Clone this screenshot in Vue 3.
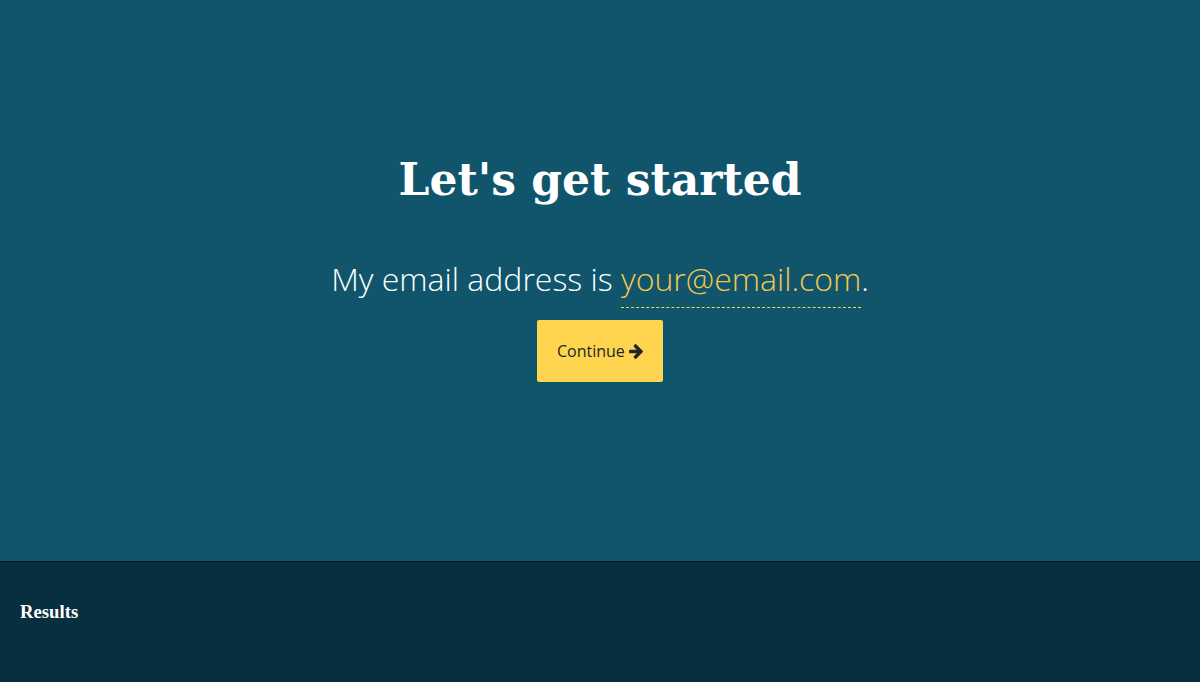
<script setup>
import { ref } from 'vue';

const email = ref('your@email.com');
</script>

<template>
  <div class="page">
    <main class="hero">
      <h1 class="title">Let's get started</h1>
      <p class="sentence">
        My email address is
        <span class="email">{{ email }}</span>.
      </p>
      <button class="continue" type="button">
        Continue
        <svg class="arrow" viewBox="128 192 1472 1536" width="14" height="15">
          <path d="M1600 960q0 54-37 91l-651 651q-39 37-91 37-51 0-90-37l-75-75q-38-38-38-91t38-91l293-293h-704q-52 0-84.5-37.5t-32.5-90.5v-128q0-53 32.5-90.5t84.5-37.5h704l-293-294q-38-36-38-90t38-90l75-75q38-38 90-38 53 0 91 38l651 651q37 35 37 90z" fill="currentColor" />
        </svg>
      </button>
    </main>
    <footer class="results">
      <h3 class="results-title">Results</h3>
    </footer>
  </div>
</template>

<style scoped>
.page {
  height: 682px;
  display: flex;
  flex-direction: column;
  background: #10556c;
  overflow: hidden;
}

.hero {
  height: 561px;
  display: flex;
  flex-direction: column;
  align-items: center;
  padding-top: 150px;
  box-sizing: border-box;
}

.title {
  margin: 0;
  color: #fff;
  font-family: "DejaVu Serif", serif;
  font-size: 44px;
  line-height: 60px;
  font-weight: 700;
}

.sentence {
  margin: 45px 0 0;
  color: #fff;
  font-family: "Open Sans", sans-serif;
  font-weight: 300;
  font-size: 32px;
  line-height: 48px;
}

.email {
  color: #f3c84f;
  border-bottom: 1px dashed #ffd34e;
  padding-bottom: 7px;
}

.continue {
  margin-top: 17px;
  width: 126px;
  height: 62px;
  border: 0;
  border-radius: 2px;
  background: #ffd54f;
  color: #212529;
  font-family: "Open Sans", sans-serif;
  font-size: 16px;
}

.arrow {
  vertical-align: -2px;
}

.results {
  flex: 1;
  background: #082f3f;
  border-top: 1px solid #021c27;
  padding: 0 20px;
}

.results-title {
  margin: 39px 0 0;
  color: #fff;
  font-family: "Liberation Serif", serif;
  font-size: 18.72px;
  line-height: 22px;
  font-weight: 700;
}
</style>
